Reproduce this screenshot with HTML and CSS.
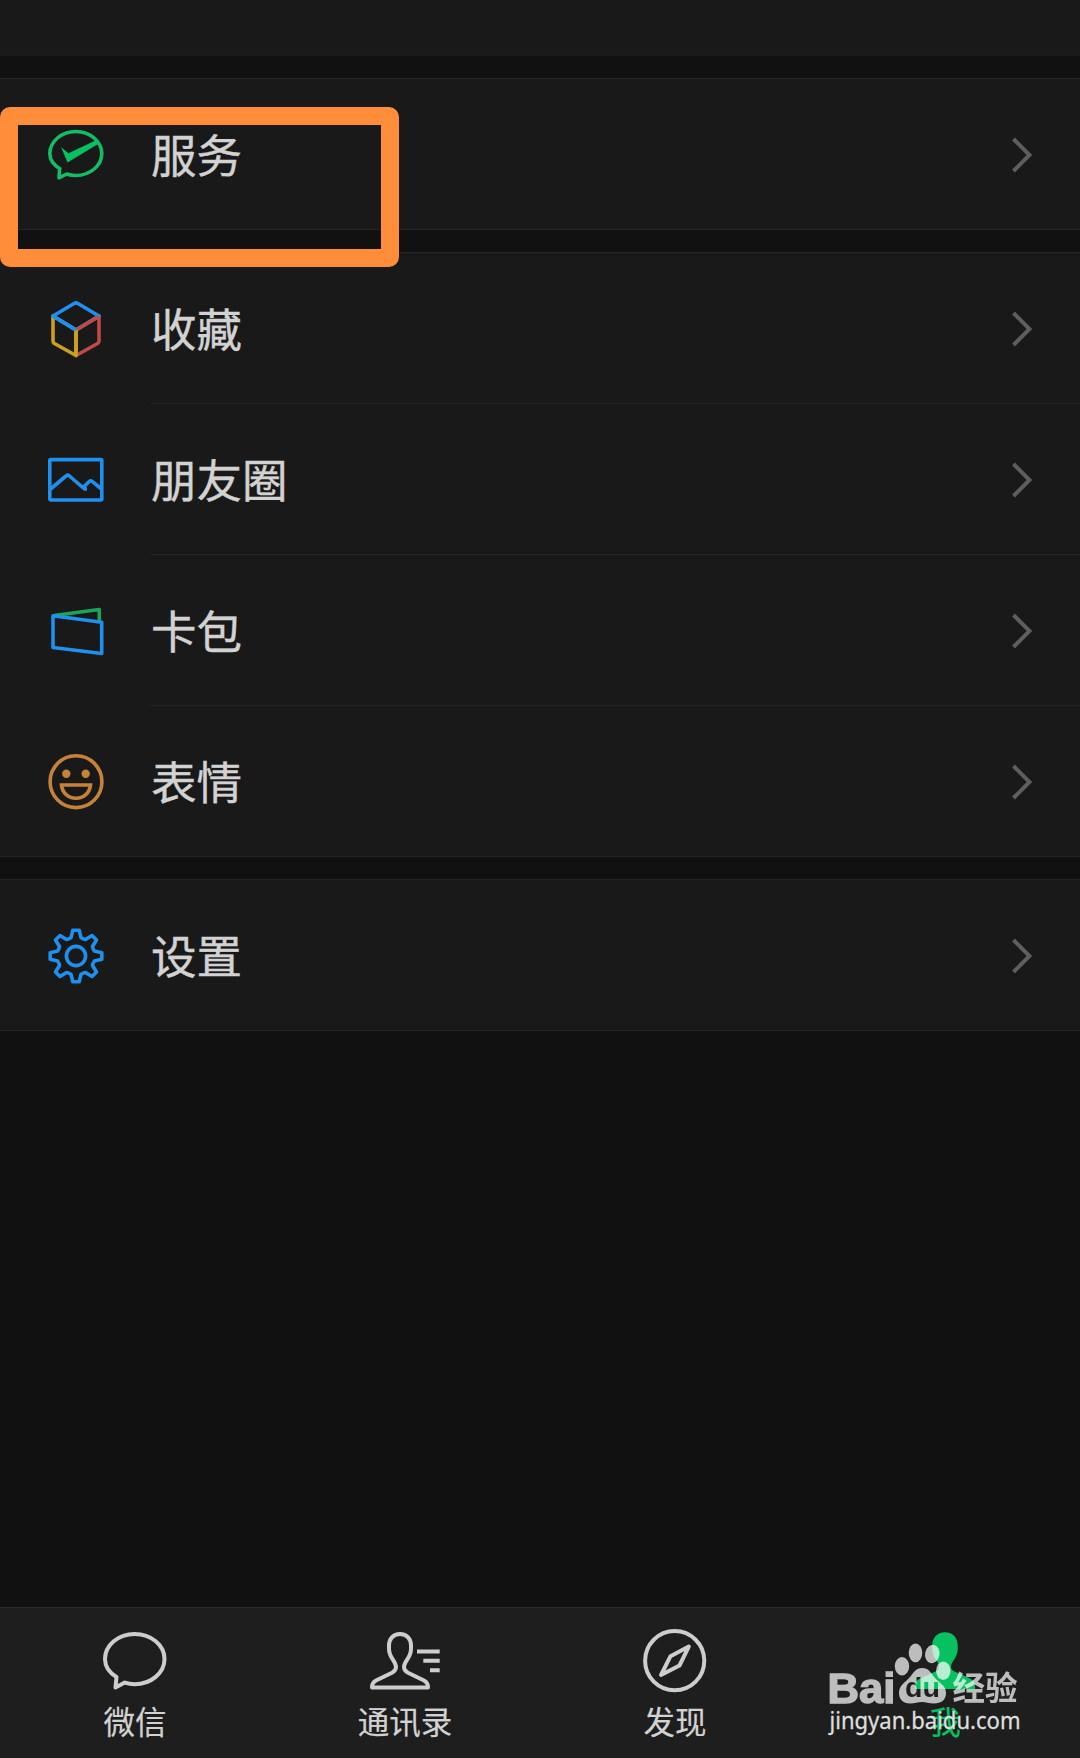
FILE: index.html
```html
<!DOCTYPE html>
<html lang="zh-CN">
<head>
	<meta charset="UTF-8">
	<title>我</title>
	<link rel="stylesheet" href="styles.css">
</head>
<body>
	<div id="page">
		<div class="profile"></div>
		<ul class="group">
			<li>
				<svg class="icon green" viewBox="0 0 56 56">
					<path d="M13 43.500C6 39.500 1.800 34 1.800 27.500C1.800 15.500 13.500 5.500 27.800 5.500S53.800 15.500 53.800 27.500S42.200 49.500 27.800 49.500C24.500 49.500 21.500 49 18.700 48L11 51.800L11.600 43"/>
					<path class="fill" d="M13.200 21.300L20.500 27.300L48.500 14L51 17.500L19.500 36.500Z"/>
				</svg>
				<span class="name">服务</span>
				<svg class="arrow" viewBox="0 0 20 36"><path d="M1.500 2L17.500 18L1.500 34"/></svg>
			</li>
		</ul>
		<ul class="group">
			<li>
				<svg class="icon" viewBox="0 0 56 56">
					<path class="red" d="M51 16V41Q51 42.500 50 43.200L28 55.500V30Z"/>
					<path class="yellow" d="M5 16V41Q5 42.500 6 43.200L28 55.500V30Z"/>
					<path class="blue" d="M5 16L26.500 3.300Q28 2.500 29.500 3.300L51 16L28 30Z"/>
					<path class="red" d="M51 16.500L28 30"/>
					<path class="yellow" d="M28 30V55.500"/>
					<path class="blue" d="M5 16L28 30"/>
				</svg>
				<span class="name">收藏</span>
				<svg class="arrow" viewBox="0 0 20 36"><path d="M1.500 2L17.500 18L1.500 34"/></svg>
			</li>
			<li>
				<svg class="icon blue" viewBox="0 0 56 56">
					<rect x="1.800" y="8.600" width="52" height="40.400" rx="1"/>
					<path d="M2 38.500L18 25Q19.700 23.500 21.400 25L36.500 38H39M34.500 37L41 30.700Q42.700 29 44.500 30.700L54 38.500"/>
				</svg>
				<span class="name">朋友圈</span>
				<svg class="arrow" viewBox="0 0 20 36"><path d="M1.500 2L17.500 18L1.500 34"/></svg>
			</li>
			<li>
				<svg class="icon" viewBox="0 0 56 56">
					<path class="green2" d="M6 13.500L51.300 7.500V20"/>
					<path class="blue" d="M5 13.700L53.700 20.300V51.500L5 45.500Z"/>
				</svg>
				<span class="name">卡包</span>
				<svg class="arrow" viewBox="0 0 20 36"><path d="M1.500 2L17.500 18L1.500 34"/></svg>
			</li>
			<li>
				<svg class="icon brown" viewBox="0 0 56 56">
					<circle cx="28" cy="28.700" r="25.900"/>
					<circle class="fill" cx="18.300" cy="20.700" r="4.200"/>
					<circle class="fill" cx="37.700" cy="20.700" r="4.200"/>
					<path class="sharp" d="M13.500 32H42.500C41.800 40 35.500 45.300 28 45.300S14.200 40 13.500 32Z"/>
				</svg>
				<span class="name">表情</span>
				<svg class="arrow" viewBox="0 0 20 36"><path d="M1.500 2L17.500 18L1.500 34"/></svg>
			</li>
		</ul>
		<ul class="group">
			<li>
				<svg class="icon blue" viewBox="-28 -29 56 56">
					<path d="M-5 -18.400L-3.200 -25.800H3.200L5 -18.400Q7 -16.800 9.500 -16.500L16 -20.500L20.500 -16L16.500 -9.500Q16.800 -7 18.400 -5L25.800 -3.200V3.200L18.400 5Q16.800 7 16.500 9.500L20.500 16L16 20.500L9.500 16.500Q7 16.800 5 18.400L3.200 25.800H-3.200L-5 18.400Q-7 16.800 -9.500 16.500L-16 20.500L-20.500 16L-16.500 9.500Q-16.800 7 -18.400 5L-25.800 3.200V-3.200L-18.400 -5Q-16.800 -7 -16.500 -9.500L-20.500 -16L-16 -20.500L-9.500 -16.500Q-7 -16.800 -5 -18.400Z"/>
					<circle cx="0" cy="0" r="9.600"/>
				</svg>
				<span class="name">设置</span>
				<svg class="arrow" viewBox="0 0 20 36"><path d="M1.500 2L17.500 18L1.500 34"/></svg>
			</li>
		</ul>
		<div class="tabs">
			<div class="tab">
				<svg viewBox="0 0 72 72"><path d="M17.500 52C10 47.500 6 41 6 34C6 20 19.300 8.900 35.700 8.900S65.500 20 65.500 34S52 59.200 35.700 59.200C32 59.200 29 58.700 25.800 57.600L16.500 62.500L17.500 52Z"/></svg>
				<span>微信</span>
			</div>
			<div class="tab">
				<svg viewBox="0 0 72 72">
					<path d="M31 9C24 9 20 14 20 20.500V24C20 33 27 36 27 42C27 45 25.500 46.500 23 47.800L7 55.500C4.500 56.800 3 59 3 62.500H59C59 59 57.500 56.800 55 55.500L39 47.800C36.500 46.500 35 45 35 42C35 36 42 33 42 24V20.500C42 14 38 9 31 9Z"/>
					<path d="M48 26.400H70.700M54.300 35.700H70.700M61 45.300H70.700"/>
				</svg>
				<span>通讯录</span>
			</div>
			<div class="tab">
				<svg viewBox="0 0 72 72">
					<circle cx="35.700" cy="35.700" r="29.600"/>
					<path d="M49.800 21.600L31.500 31.200L22 50L40.500 40.500Z"/>
				</svg>
				<span>发现</span>
			</div>
			<div class="tab on">
				<svg viewBox="0 0 72 72"><path d="M36 7.300C28 7.300 23.300 13 23.300 20.500V24C23.300 33 30 36 30 42C30 44 29 45.300 27 46.300L11 53.500C7.500 55.300 6 58 6 61.500V64H66V61.500C66 58 64.500 55.300 61 53.500L45 46.300C43 45.300 42 44 42 42C42 36 48.700 33 48.700 24V20.500C48.700 13 44 7.300 36 7.300Z"/></svg>
				<span>我</span>
			</div>
		</div>
		<div class="mark"></div>
		<svg class="water" viewBox="0 0 210 110">
			<mask id="du">
				<rect width="210" height="110" fill="#fff"/>
				<text x="85" y="76.500" class="du" textLength="35" lengthAdjust="spacingAndGlyphs">du</text>
			</mask>
			<g class="logo">
				<text x="7.500" y="82.500" class="bai" textLength="68" lengthAdjust="spacingAndGlyphs">Bai</text>
				<ellipse cx="82" cy="46.300" rx="7.200" ry="9.200"/>
				<ellipse cx="95.500" cy="32.800" rx="6.800" ry="9.400"/>
				<ellipse cx="112.300" cy="34" rx="7.200" ry="9.200" transform="rotate(12 112.300 34)"/>
				<ellipse cx="123.300" cy="50.700" rx="7.200" ry="9.200"/>
				<path mask="url(#du)" d="M102 48C109 48 111 53 115 58C119 63 126 65 126 73C126 80 121 83.500 114 83.500C109 83.500 106 82 102 82S95 83.500 90 83.500C83 83.500 79 79 79 73C79 65 85 63 90 57C94 52 96 48 102 48Z"/>
				<text x="132.500" y="79.500" class="jing" textLength="65" lengthAdjust="spacingAndGlyphs">经验</text>
			</g>
			<text x="9.500" y="108.500" class="url" textLength="191" lengthAdjust="spacingAndGlyphs">jingyan.baidu.com</text>
		</svg>
	</div>
</body>
</html>
```
FILE: styles.css
```css
*{
	margin: 0;
	padding: 0;
	box-sizing: border-box;
}
body{
	background-color: #111;
	font-family: "Noto Sans CJK SC","Liberation Sans",sans-serif;
	color: #d2d2d2;
}
li{
	list-style: none;
}
#page{
	width: 1080px;
	height: 1758px;
	position: relative;
	display: flex;
	flex-direction: column;
	gap: 22px;
	overflow: hidden;
}
.profile{
	height: 56px;
	background-color: #191919;
	border-bottom: 1px solid #1c1c1c;
}
.group{
	background-color: #191919;
	border-top: 1px solid #262626;
	border-bottom: 1px solid #262626;
}
.group li{
	height: 151px;
	padding: 0 48px 1px 48px;
	display: flex;
	align-items: center;
}
.group li:last-child{
	height: 150px;
	padding-bottom: 0;
}
/* 分割线从文字处开始 */
.group li:not(:last-child){
	background: linear-gradient(#252525,#252525) 151px 150px / 929px 1px no-repeat;
}
.icon{
	width: 56px;
	height: 56px;
	overflow: visible;
	fill: none;
	stroke-width: 3.6;
	stroke-linejoin: round;
}
.icon .fill{
	stroke: none;
}
.icon .sharp{
	stroke-linejoin: miter;
}
.green{
	stroke: #16bc65;
}
.green .fill{
	fill: #07c160;
}
.green2{
	stroke: #1ca457;
}
.blue{
	stroke: #1f90ee;
}
.red{
	stroke: #c14a48;
}
.yellow{
	stroke: #c9a01f;
}
.brown{
	stroke: #c7823a;
}
.brown .fill{
	fill: #c7823a;
}
.name{
	flex: 1;
	margin-left: 47px;
	padding-bottom: 2px;
	font-size: 45.5px;
	line-height: 66px;
	-webkit-text-stroke: .4px #d2d2d2;
}
.arrow{
	width: 20px;
	height: 36px;
	margin-top: 1px;
	fill: none;
	stroke: #5e5e5e;
	stroke-width: 4;
}

.tabs{
	height: 151px;
	margin-top: auto;
	display: flex;
	background-color: #1e1e1e;
	border-top: 1px solid #2a2a2a;
}
.tab{
	flex: 1;
	padding-top: 17px;
	display: flex;
	flex-direction: column;
	align-items: center;
}
.tab svg{
	width: 72px;
	height: 72px;
	fill: none;
	stroke: #cdcdcd;
	stroke-width: 4;
	stroke-linejoin: round;
}
.tab span{
	font-size: 31.5px;
	line-height: 46px;
	-webkit-text-stroke: .2px;
}
.on{
	color: #07c160;
}
.on svg{
	fill: #07c160;
	stroke: none;
}

.mark{
	position: absolute;
	left: 0;
	top: 106.500px;
	width: 398.500px;
	height: 160px;
	border: 18px solid #ff8d3a;
	border-radius: 10px;
}
.water{
	position: absolute;
	left: 820px;
	top: 1620px;
	width: 210px;
	height: 110px;
	overflow: visible;
	fill: #fff;
}
.logo{
	opacity: .71;
}
.bai{
	font: bold 43px "Liberation Sans",sans-serif;
	stroke: #fff;
	stroke-width: 1.4;
}
.du{
	font: bold 27px "Liberation Sans",sans-serif;
	fill: #000;
}
.jing{
	font: bold 33px "Noto Sans CJK SC",sans-serif;
}
.url{
	font: 23px "Noto Sans",sans-serif;
	fill: #dedede;
	stroke: #dedede;
	stroke-width: .3;
}
```
